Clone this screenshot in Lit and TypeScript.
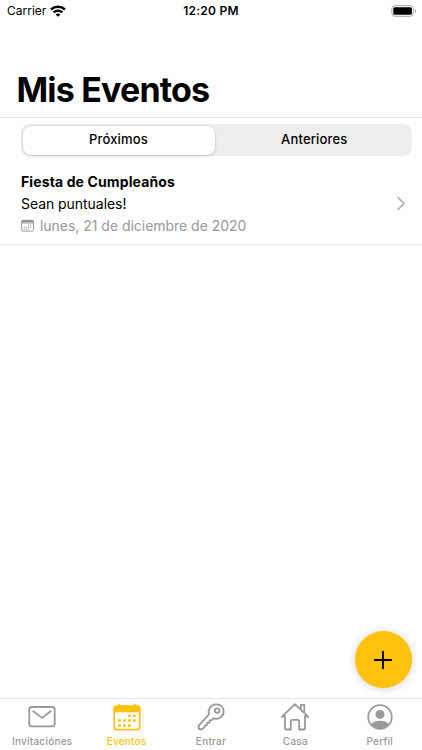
import { LitElement, html, css, svg } from "lit";
import { customElement, property, state } from "lit/decorators.js";
import { classMap } from "lit/directives/class-map.js";

const dots = (points: number[][], r: number) =>
  points.map(([x, y]) => svg`<circle cx=${x} cy=${y} r=${r} fill="currentColor"/>`);

const icons: Record<string, unknown> = {
  mail: html`<svg width="30" height="30" viewBox="0 0 30 30" fill="none" stroke="currentColor" stroke-width="1.8" stroke-linejoin="round" stroke-linecap="round">
    <rect x="2.3" y="5" width="25.4" height="19.4" rx="2.4"/><path d="M6.3 9.2L15 15.9L23.7 9.2"/></svg>`,
  calendar: html`<svg width="30" height="30" viewBox="0 0 30 30" fill="none">
    <path d="M4.6 4.2H25.4A2.4 2.4 0 0 1 27.7 6.6V25.2A2.4 2.4 0 0 1 25.3 27.6H4.7A2.4 2.4 0 0 1 2.3 25.2V6.6A2.4 2.4 0 0 1 4.6 4.2Z" stroke="currentColor" stroke-width="1.7"/>
    <path d="M1.5 10.2V6.2A2.7 2.7 0 0 1 4.2 3.5H6.3V1.8H8V3.5H22V1.8H23.7V3.5H25.8A2.7 2.7 0 0 1 28.5 6.2V10.2Z" fill="currentColor"/>
    ${dots([[17.4, 13.7], [22.2, 13.7], [7.6, 18.6], [12.5, 18.6], [17.4, 18.6], [22.2, 18.6], [7.6, 23.5], [12.5, 23.5], [17.4, 23.5]], 1.5)}</svg>`,
  key: html`<svg width="30" height="30" viewBox="0 0 30 30" fill="none" stroke="currentColor" stroke-width="1.8" stroke-linejoin="round" stroke-linecap="round">
    <path d="M12.9 12.4C11.6 7.8 14.4 2.5 20.2 2.4C24.6 2.3 27.8 5.5 27.7 9.5C27.6 14.6 22.4 17.8 17.2 16.4L15.8 18.2L13.6 18.5L13.5 20.6L11.2 20.9L10.9 23L9 23.4L8.5 25.1L5.9 27.3L3 27L2.5 23.8Z"/><circle cx="21.2" cy="8.6" r="2.3"/></svg>`,
  house: html`<svg width="30" height="30" viewBox="0 0 30 30" fill="none" stroke="currentColor" stroke-width="1.8" stroke-linejoin="round" stroke-linecap="round">
    <path d="M1.7 14.8L15 2.1L28.3 14.8L25 14.2V25.9Q25 27.5 23.4 27.5H19.2V19.2Q19.2 17.8 17.8 17.8H12.2Q10.8 17.8 10.8 19.2V27.5H6.6Q5 27.5 5 25.9V14.2L1.7 14.8"/><path d="M20.8 7V2.9H24.3V10.3"/></svg>`,
  person: html`<svg width="30" height="30" viewBox="0 0 30 30" fill="none">
    <circle cx="15" cy="15" r="11.8" stroke="currentColor" stroke-width="1.7"/><circle cx="15" cy="12.4" r="4.5" fill="currentColor"/>
    <path d="M6.3 22.2C8 19.8 11.3 18.8 15 18.8S22 19.8 23.7 22.2A11.4 11.4 0 0 1 6.3 22.2Z" fill="currentColor"/></svg>`,
};

@customElement("status-bar")
class StatusBar extends LitElement {
  static styles = css`
    :host { display: grid; grid-template-columns: 1fr auto 1fr; align-items: center; height: 22px; padding: 0 5px 0 7px; font-size: 12px; line-height: 22px; }
    .left { display: flex; align-items: center; gap: 4px; }
    .time { margin-right: 2px; font-weight: 600; letter-spacing: .25px; }
    .left svg { margin-top: -1px; }
    .battery { justify-self: end; margin-top: -1px; }
    svg { display: block; }
  `;
  render() {
    return html`
      <div class="left"><span class="carrier">Carrier</span>
        <svg width="16" height="12" viewBox="0 0 16 12" fill="none" stroke="#000" stroke-width="2.4">
          <path d="M1 4.5C5 .8 11 .8 15 4.5"/><path d="M3.6 7.4C6.2 5.1 9.8 5.1 12.4 7.4"/><path d="M8 11.8L5.6 9.4Q8 7.7 10.4 9.4Z" fill="#000" stroke="none"/>
        </svg></div>
      <span class="time">12:20 PM</span>
      <svg class="battery" width="26" height="12" viewBox="0 0 26 12">
        <rect x=".9" y=".7" width="21.4" height="10.6" rx="3" fill="#fff" stroke="#a5a5a5"/><rect x="2.3" y="2.3" width="18.6" height="7.4" rx="1.5"/>
        <path d="M24 4.2Q25.2 4.8 25.2 6T24 7.8Z" fill="#999"/>
      </svg>`;
  }
}

@customElement("segmented-control")
class SegmentedControl extends LitElement {
  @property({ type: Array }) options: string[] = [];
  @state() selected = 0;
  static styles = css`
    :host { display: grid; grid-template-columns: 192px 1fr; height: 32px; padding: 1.5px; box-sizing: border-box; border-radius: 9px; background: #eeeeef; }
    .option { display: flex; align-items: center; justify-content: center; border: 0; padding: 0 0 1.5px; border-radius: 8px; background: none; color: #000; font: 500 13px "Inter", sans-serif; letter-spacing: .17px; }
    .option + .option { padding-left: 4px; }
    .selected { background: #fff; box-shadow: 0 0 0 .5px rgba(0,0,0,.06), 0 1px 3px rgba(0,0,0,.17); }
  `;
  render() {
    return this.options.map((label, i) => html`<button class=${classMap({ option: true, selected: i === this.selected })} @click=${() => (this.selected = i)}>${label}</button>`);
  }
}

@customElement("event-row")
class EventRow extends LitElement {
  @property() name = "";
  @property() note = "";
  @property() date = "";
  static styles = css`
    :host { display: flex; align-items: center; justify-content: space-between; height: 89px; padding: 7px 16px 0 21px; box-sizing: border-box; border-bottom: 1px solid #e9e9e9; }
    .details { display: flex; flex-direction: column; }
    .name { font-size: 14px; font-weight: 700; line-height: 22px; letter-spacing: .12px; }
    .note { font-size: 14px; line-height: 21px; letter-spacing: -.05px; }
    .date { display: flex; align-items: center; gap: 6px; font-size: 14px; line-height: 23px; letter-spacing: -.03px; color: #999; }
    svg { display: block; }
  `;
  render() {
    return html`
      <div class="details">
        <div class="name">${this.name}</div>
        <div class="note">${this.note}</div>
        <div class="date">
          <svg width="13" height="13" viewBox="0 0 13 13" fill="none">
            <rect x=".6" y="1.3" width="11.8" height="10.8" rx="1.5" stroke="currentColor"/><path d="M.6 2.5H12.4" stroke="#888" stroke-width="2"/><path d="M.6 4.4H12.4" stroke="currentColor" stroke-width=".6"/>
            ${dots([[7.5, 6.2], [9.7, 6.2], [3.2, 8.2], [5.4, 8.2], [7.5, 8.2], [9.7, 8.2], [3.2, 10.2], [5.4, 10.2], [7.5, 10.2]], 0.6)}
          </svg><span>${this.date}</span>
        </div>
      </div>
      <svg width="10" height="15" viewBox="0 0 10 15" fill="none" stroke="#b9b9bb" stroke-width="1.8"><path d="M1.7 1.2L8 7.5L1.7 13.8"/></svg>`;
  }
}

@customElement("tab-bar")
class TabBar extends LitElement {
  @state() active = "Eventos";
  tabs = [["Invitaciónes", "mail"], ["Eventos", "calendar"], ["Entrar", "key"], ["Casa", "house"], ["Perfil", "person"]];
  static styles = css`
    :host { display: grid; grid-template-columns: repeat(5, 1fr); height: 52px; box-sizing: border-box; border-top: 1px solid #e4e4e4; background: #fff; }
    .tab { display: flex; flex-direction: column; align-items: center; padding: 3px 0 0; border: 0; background: none; color: #999; font: 500 10px/12px "Inter", sans-serif; letter-spacing: .24px; }
    .label { margin-top: 3px; white-space: nowrap; }
    .active { color: #fec20e; }
    svg { display: block; }
  `;
  render() {
    return this.tabs.map(([label, icon]) => html`<button class=${classMap({ tab: true, active: label === this.active })} @click=${() => (this.active = label)}>${icons[icon]}<span class="label">${label}</span></button>`);
  }
}

@customElement("app-root")
class AppRoot extends LitElement {
  static styles = css`
    :host { position: relative; display: flex; flex-direction: column; height: 750px; background: #fff; color: #000; font-family: "Inter", sans-serif; overflow: hidden; }
    .header { display: flex; align-items: flex-end; height: 96px; box-sizing: border-box; padding: 0 16px 6px; border-bottom: 1px solid #e9e9e9; }
    .title { margin: 0; font-size: 34px; font-weight: 660; line-height: 42px; letter-spacing: -.82px; padding-left: .5px; white-space: nowrap; }
    .segments { margin: 6px 10.5px 0 21px; }
    .events { flex: 1; }
    .add { position: absolute; right: 10.5px; bottom: 62px; display: flex; align-items: center; justify-content: center; width: 57px; height: 57px; padding: 0; border: 0; border-radius: 50%; background: #fec20e; box-shadow: 0 1px 9px rgba(0,0,0,.18); }
  `;
  render() {
    return html`
      <status-bar></status-bar>
      <header class="header"><h1 class="title">Mis Eventos</h1></header>
      <segmented-control class="segments" .options=${["Próximos", "Anteriores"]}></segmented-control>
      <main class="events"><event-row name="Fiesta de Cumpleaños" note="Sean puntuales!" date="lunes, 21 de diciembre de 2020"></event-row></main>
      <button class="add" aria-label="+"><svg width="20" height="20" viewBox="0 0 20 20" stroke="#000" stroke-width="1.9" stroke-linecap="round"><path d="M10 1.8V18.2M1.8 10H18.2"/></svg></button>
      <tab-bar></tab-bar>`;
  }
}
